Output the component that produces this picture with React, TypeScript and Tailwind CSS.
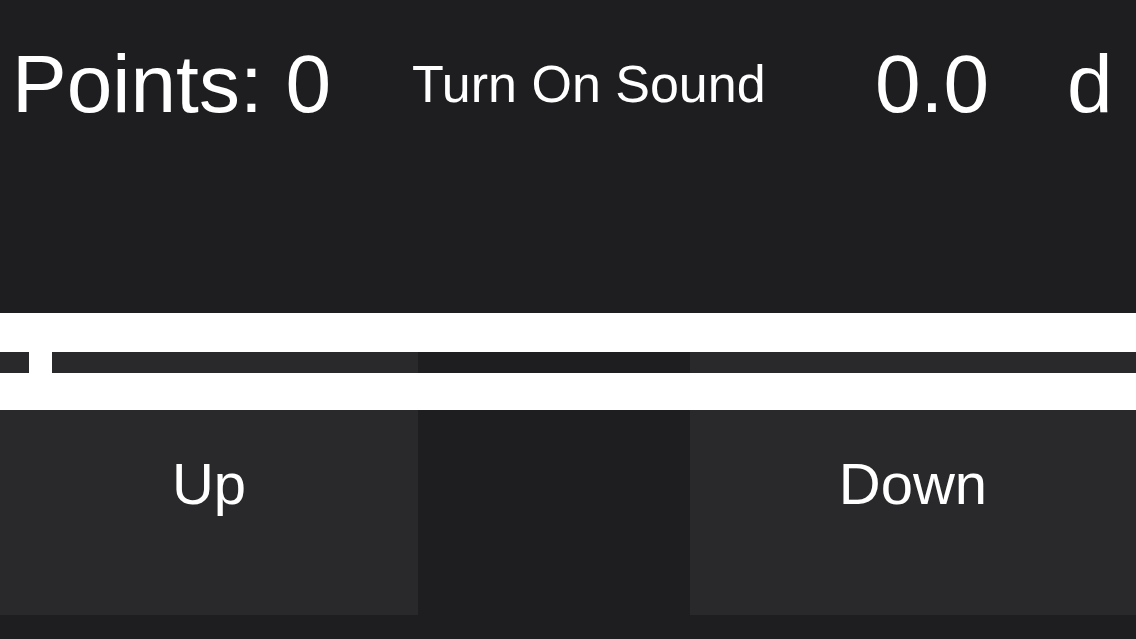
export default function App() {
  const font = { fontFamily: '"Liberation Sans", Arial, sans-serif' };

  return (
    <div className="w-[1136px] h-[639px] bg-[#1e1d20] text-white overflow-hidden" style={font}>
      {/* header */}
      <div className="h-[168px] flex items-center">
        <div className="w-[412px] pl-3 text-[82px] leading-none">Points: 0</div>
        <div className="w-[463px] text-[52px] leading-none">Turn On Sound</div>
        <div className="w-[192px] text-[82px] leading-none">0.0</div>
        <div className="text-[82px] leading-none">d</div>
      </div>

      <div className="h-[145px]" />

      {/* track */}
      <div className="h-[39px] bg-white" />

      <div className="relative h-[263px] flex">
        <button className="w-[418px] h-full bg-[#29282b] text-[58px] leading-none text-white">
          Up
        </button>
        <div className="w-[272px]" />
        <button className="flex-1 h-full bg-[#29282b] text-[58px] leading-none text-white">
          Down
        </button>

        <div className="absolute left-0 right-0 top-[21px] h-[37px] bg-white" />
        <div className="absolute left-[29px] top-0 w-[23px] h-[21px] bg-white" />
      </div>
    </div>
  );
}
